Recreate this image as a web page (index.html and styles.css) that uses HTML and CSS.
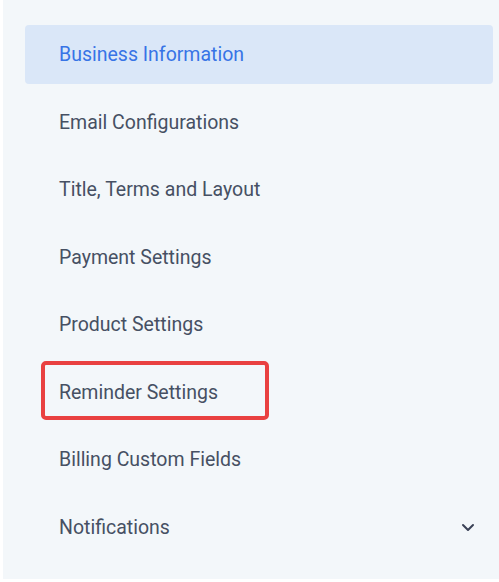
FILE: index.html
```html
<!DOCTYPE html>
<html>
<head>
<meta charset="utf-8">
<link rel="stylesheet" href="styles.css">
</head>
<body>
<nav class="sidebar">
  <ul class="menu">
    <li class="item active">Business Information</li>
    <li class="item">Email Configurations</li>
    <li class="item">Title, Terms and Layout</li>
    <li class="item">Payment Settings</li>
    <li class="item">Product Settings</li>
    <li class="item highlighted">Reminder Settings<span class="annotation"></span></li>
    <li class="item">Billing Custom Fields</li>
    <li class="item expandable">Notifications
      <svg class="chevron" width="14" height="9" viewBox="0 0 14 9"><path d="M2 2l5 5 5-5" fill="none" stroke="#3a4256" stroke-width="2" stroke-linecap="round" stroke-linejoin="round"/></svg>
    </li>
  </ul>
</nav>
</body>
</html>
```
FILE: styles.css
```css
html, body {
  margin: 0;
  padding: 0;
  background: #ffffff;
}
body {
  width: 499px;
  height: 582px;
  overflow: hidden;
}
.sidebar {
  margin-left: 3px;
  height: 579px;
  background: #f3f7fa;
  padding: 25px 6px 0 22px;
  box-sizing: border-box;
  font-family: Roboto, "Liberation Sans", sans-serif;
}
.menu {
  list-style: none;
  margin: 0;
  padding: 0;
  display: flex;
  flex-direction: column;
  gap: 8.5px;
}
.item {
  position: relative;
  height: 59px;
  display: flex;
  align-items: center;
  padding-left: 34px;
  padding-right: 18px;
  font-size: 19.5px;
  color: #465063;
  border-radius: 4px;
}
.item.active {
  background: #dae7f8;
  color: #3774e6;
}
.item.expandable {
  justify-content: space-between;
}
.annotation {
  position: absolute;
  left: 16px;
  top: -1.5px;
  width: 228px;
  height: 59px;
  box-sizing: border-box;
  border: 4px solid #e94141;
  border-radius: 5px;
}
```
